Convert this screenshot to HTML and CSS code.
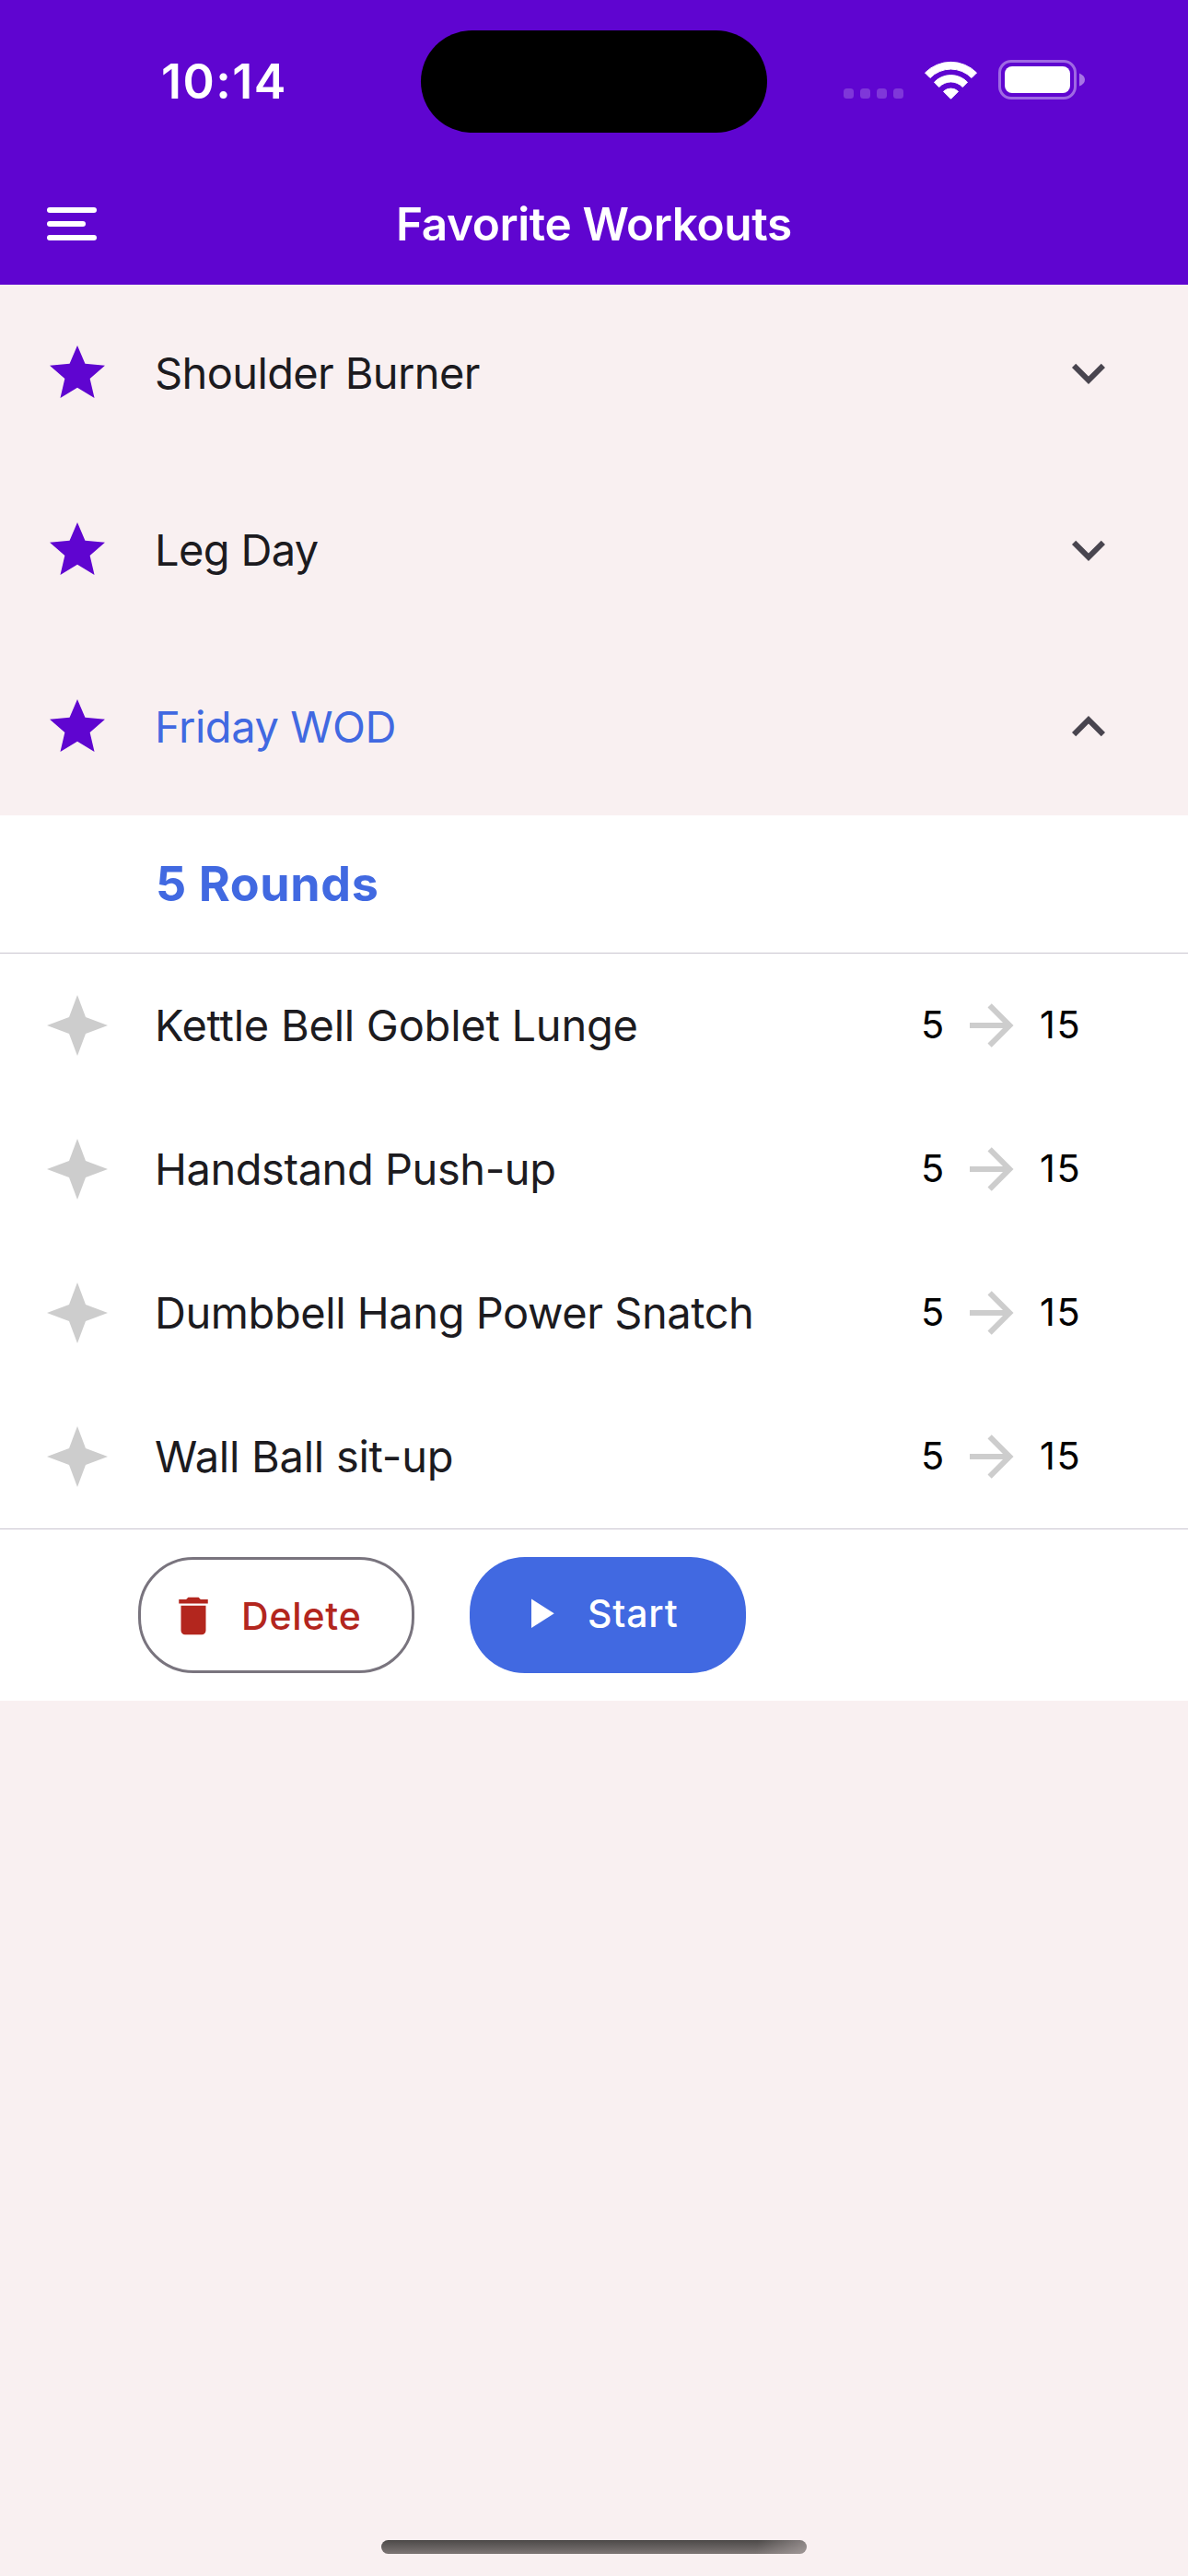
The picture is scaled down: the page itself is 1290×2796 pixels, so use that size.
FILE: index.html
```html
<!DOCTYPE html>
<html lang="en">
<head>
<meta charset="utf-8">
<title>Favorite Workouts</title>
<link rel="stylesheet" href="styles.css">
</head>
<body>
<svg class="sprite" aria-hidden="true">
  <symbol id="star" viewBox="0 0 24 24"><path d="M12,17.27L18.18,21L16.54,13.97L22,9.24L14.81,8.62L12,2L9.19,8.62L2,9.24L7.45,13.97L5.82,21L12,17.27Z"/></symbol>
  <symbol id="star-four" viewBox="0 0 24 24"><path d="M12,1L9,9L1,12L9,15L12,23L15,15L23,12L15,9L12,1Z"/></symbol>
  <symbol id="chevron-down" viewBox="0 0 24 24"><path d="M7.41,8.58L12,13.17L16.59,8.58L18,10L12,16L6,10L7.41,8.58Z"/></symbol>
  <symbol id="chevron-up" viewBox="0 0 24 24"><path d="M7.41,15.41L12,10.83L16.59,15.41L18,14L12,8L6,14L7.41,15.41Z"/></symbol>
  <symbol id="arrow-right" viewBox="0 0 24 24"><path d="M4,11V13H16L10.5,18.5L11.92,19.92L19.84,12L11.92,4.08L10.5,5.5L16,11H4Z"/></symbol>
  <symbol id="delete" viewBox="0 0 24 24"><path d="M19,4H15.5L14.5,3H9.5L8.5,4H5V6H19M6,19A2,2 0 0,0 8,21H16A2,2 0 0,0 18,19V7H6V19Z"/></symbol>
  <symbol id="play" viewBox="0 0 24 24"><path d="M8,5.14V19.14L19,12.14L8,5.14Z"/></symbol>
</svg>

<header class="header">
  <div class="status">
    <div class="clock">10:14</div>
    <div class="island"></div>
    <div class="indicators">
      <div class="cell"><i></i><i></i><i></i><i></i></div>
      <svg class="wifi" viewBox="0 0 59 43">
        <path d="M1.5 14A39.5 39.5 0 0 1 57.5 14L52 19.5A31.5 31.5 0 0 0 7 19.5Z"/>
        <path d="M11.5 24.2A25 25 0 0 1 47.5 24.2L42.3 29.5A17.5 17.5 0 0 0 16.7 29.5Z"/>
        <path d="M21.5 34.3A11.5 11.5 0 0 1 37.5 34.3L29.5 42.3Z"/>
      </svg>
      <svg class="battery" viewBox="0 0 94 43">
        <rect class="shell" x="1.5" y="1.5" width="82" height="40" rx="12.5"/>
        <rect class="charge" x="7" y="7" width="71" height="29" rx="8"/>
        <path class="nub" d="M88 14.5Q94 17 94 21.5Q94 26 88 28.5Z"/>
      </svg>
    </div>
  </div>
  <div class="appbar">
    <div class="menu"><span></span><span class="short"></span><span></span></div>
    <h1 class="title">Favorite Workouts</h1>
  </div>
</header>

<main>
  <div class="workout">
    <svg class="icon star"><use href="#star"/></svg>
    <span class="name tight">Shoulder Burner</span>
    <svg class="icon chevron"><use href="#chevron-down"/></svg>
  </div>
  <div class="workout">
    <svg class="icon star"><use href="#star"/></svg>
    <span class="name tight">Leg Day</span>
    <svg class="icon chevron"><use href="#chevron-down"/></svg>
  </div>
  <div class="workout open">
    <svg class="icon star"><use href="#star"/></svg>
    <span class="name">Friday WOD</span>
    <svg class="icon chevron"><use href="#chevron-up"/></svg>
  </div>

  <section class="details">
    <h2 class="rounds">5 Rounds</h2>
    <div class="exercises">
      <div class="exercise">
        <svg class="icon spark"><use href="#star-four"/></svg>
        <span class="name loose">Kettle Bell Goblet Lunge</span>
        <span class="reps">5</span><svg class="icon arrow"><use href="#arrow-right"/></svg><span class="goal">15</span>
      </div>
      <div class="exercise">
        <svg class="icon spark"><use href="#star-four"/></svg>
        <span class="name">Handstand Push-up</span>
        <span class="reps">5</span><svg class="icon arrow"><use href="#arrow-right"/></svg><span class="goal">15</span>
      </div>
      <div class="exercise">
        <svg class="icon spark"><use href="#star-four"/></svg>
        <span class="name">Dumbbell Hang Power Snatch</span>
        <span class="reps">5</span><svg class="icon arrow"><use href="#arrow-right"/></svg><span class="goal">15</span>
      </div>
      <div class="exercise">
        <svg class="icon spark"><use href="#star-four"/></svg>
        <span class="name loose">Wall Ball sit-up</span>
        <span class="reps">5</span><svg class="icon arrow"><use href="#arrow-right"/></svg><span class="goal">15</span>
      </div>
    </div>
    <div class="actions">
      <button class="btn delete"><svg class="btn-icon"><use href="#delete"/></svg>Delete</button>
      <button class="btn start"><svg class="btn-icon"><use href="#play"/></svg>Start</button>
    </div>
  </section>
</main>

<div class="home-indicator"></div>
</body>
</html>
```
FILE: styles.css
```css
* { box-sizing: border-box; }

body {
  margin: 0;
  height: 2796px;
  display: flex;
  flex-direction: column;
  background: #f9f0f1;
  color: #1c1b1f;
  font-family: Inter, "Liberation Sans", sans-serif;
}

.sprite { display: none; }

.icon {
  width: 72px;
  height: 72px;
  flex: none;
  fill: currentColor;
}

/* Header */
.header {
  height: 309px;
  background: #5f05d0;
  color: #fff;
}

.status {
  height: 177px;
  display: grid;
  grid-template-columns: 457px 376px 1fr;
  align-items: center;
}

.clock {
  padding-left: 175px;
  font-size: 52px;
  font-weight: 600;
  line-height: 62px;
  letter-spacing: 1.5px;
}

.island {
  height: 111px;
  border-radius: 56px;
  background: #000;
}

.indicators {
  height: 43px;
  padding-left: 83px;
  margin-top: -4px;
  display: flex;
  align-items: flex-end;
}

.cell {
  display: flex;
  gap: 7px;
  margin: 0 22px 1px 0;
}

.cell i {
  width: 11px;
  height: 11px;
  border-radius: 3.5px;
  background: rgba(255, 255, 255, 0.2);
}

.wifi {
  width: 59px;
  height: 43px;
  margin-right: 22px;
  fill: #fff;
  stroke: #fff;
  stroke-width: 1;
  stroke-linejoin: round;
}

.battery { width: 94px; height: 43px; }
.shell { fill: none; stroke: #fff; stroke-width: 3; opacity: 0.4; }
.charge { fill: #fff; }
.nub { fill: #fff; opacity: 0.45; }

.appbar {
  height: 132px;
  padding-left: 51px;
  display: flex;
  align-items: center;
}

.menu {
  width: 54px;
  display: flex;
  flex-direction: column;
  gap: 9px;
}

.menu span {
  height: 6px;
  border-radius: 3px;
  background: #fff;
}

.menu .short { width: 42px; }

.title {
  margin: 0 0 0 325px;
  font-size: 49.5px;
  font-weight: 600;
  line-height: 60px;
  letter-spacing: -0.38px;
}

/* Workout list */
.workout {
  height: 192px;
  padding: 0 72px 0 48px;
  display: flex;
  align-items: center;
}

.star { color: #5f05d0; }
.chevron { color: #49454f; }

.name {
  flex: 1;
  margin-left: 48px;
  font-size: 47px;
  line-height: 56px;
  letter-spacing: -0.44px;
}

.name.tight { letter-spacing: -0.63px; }
.name.loose { letter-spacing: -0.25px; }
.open .name { color: #4169e1; }

/* Expanded workout */
.details { background: #fff; }

.rounds {
  height: 150px;
  margin: 0;
  padding-left: 169px;
  border-bottom: 1px solid #c9c5d0;
  color: #4169e1;
  font-size: 52px;
  font-weight: 700;
  line-height: 150px;
  letter-spacing: 0.6px;
}

.exercises {
  height: 625px;
  border-bottom: 1px solid #c9c5d0;
}

.exercise {
  height: 156px;
  padding-left: 48px;
  display: flex;
  align-items: center;
}

.spark,
.arrow { color: #cdcdcd; }

.reps,
.goal {
  font-size: 41.5px;
  line-height: 50px;
  padding-bottom: 2px;
  color: #000;
  letter-spacing: 1.5px;
}

.reps { width: 41px; }
.goal { width: 177px; padding-left: 16px; }

.actions {
  height: 186px;
  padding: 30px 150px;
  display: flex;
  gap: 60px;
}

.btn {
  width: 300px;
  height: 126px;
  padding: 0;
  border: 0;
  border-radius: 60px;
  display: flex;
  align-items: center;
  font-family: inherit;
  font-size: 41px;
  font-weight: 500;
  line-height: 50px;
  letter-spacing: 0.8px;
}

.btn-icon {
  width: 54px;
  height: 54px;
  flex: none;
  fill: currentColor;
}

.delete {
  padding: 1px 0 0 30px;
  border: 3px solid #79747e;
  background: #fff;
  color: #b3261e;
}

.delete .btn-icon { margin-right: 25px; }

.start {
  padding: 0 0 5px 49px;
  background: #4169e1;
  color: #fff;
}

.start .btn-icon { margin-right: 25px; }

.home-indicator {
  width: 462px;
  height: 15px;
  margin: auto auto 24px;
  border-radius: 8px;
  background:
    linear-gradient(100deg, transparent 88%, rgba(190, 180, 180, 0.55) 100%),
    linear-gradient(#4c4948, #7d7675);
}
```
